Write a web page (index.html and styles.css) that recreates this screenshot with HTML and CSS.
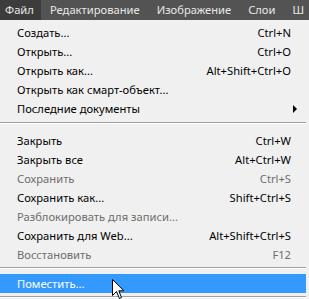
FILE: index.html
```html
<!DOCTYPE html>
<html lang="ru">
  <head>
    <meta charset="utf-8">
    <title>Файл</title>
    <link rel="stylesheet" href="styles.css">
  </head>
  <body>
    <div class="menubar">
      <span class="top active">Файл</span>
      <span class="top">Редактирование</span>
      <span class="top">Изображение</span>
      <span class="top">Слои</span>
      <span class="top">Ш</span>
    </div>
    <ul class="menu">
      <li><span>Создать...</span><span class="key">Ctrl+N</span></li>
      <li><span>Открыть...</span><span class="key">Ctrl+O</span></li>
      <li><span>Открыть как...</span><span class="key">Alt+Shift+Ctrl+O</span></li>
      <li><span>Открыть как смарт-объект...</span></li>
      <li class="sub"><span>Последние документы</span><span class="arrow"></span></li>
      <li class="sep"></li>
      <li><span>Закрыть</span><span class="key">Ctrl+W</span></li>
      <li><span>Закрыть все</span><span class="key">Alt+Ctrl+W</span></li>
      <li class="off"><span>Сохранить</span><span class="key">Ctrl+S</span></li>
      <li><span>Сохранить как...</span><span class="key">Shift+Ctrl+S</span></li>
      <li class="off"><span>Разблокировать для записи...</span></li>
      <li><span>Сохранить для Web...</span><span class="key">Alt+Shift+Ctrl+S</span></li>
      <li class="off"><span>Восстановить</span><span class="key">F12</span></li>
      <li class="sep thin"></li>
      <li class="hot"><span>Поместить...</span></li>
      <li class="sep thin"></li>
    </ul>
    <svg class="cursor" width="13" height="21" viewBox="0 0 13 21">
      <path d="M0.5 0.5 L0.5 16.5 L4.5 12.5 L7.5 19.5 L9.5 18.5 L6.8 11.8 L12 11.8 Z" fill="#fff" stroke="#000" stroke-width="1"/>
    </svg>
  </body>
</html>
```

FILE: styles.css
```css
html, body {
  margin: 0;
  padding: 0;
}
body {
  width: 309px;
  height: 299px;
  overflow: hidden;
  background: #f0f0f0;
  font: 11.2px "Noto Sans", sans-serif;
  position: relative;
}
.menubar {
  display: flex;
  height: 20px;
  background: #535353;
  color: #e8e8e8;
  font-size: 11.2px;
  white-space: nowrap;
  overflow: hidden;
}
.top {
  padding: 0 8px;
  line-height: 20px;
  margin-right: 1px;
}
.top.active {
  background: #3c3c3c;
  padding: 0 7px 0 5px;
}
.menu {
  list-style: none;
  margin: 0;
  padding: 3px 0 0;
}
.menu li {
  display: flex;
  justify-content: space-between;
  align-items: center;
  height: 19px;
  padding: 0 18px 0 17px;
  color: #000;
  white-space: nowrap;
}
.menu li.off {
  color: #6d6d6d;
}
.menu li.sep {
  height: 9px;
  padding: 0;
  display: block;
}
.menu li.sep::before {
  content: "";
  display: block;
  margin: 4px 3px 0 0;
  border-top: 1px solid #a0a0a0;
  border-bottom: 1px solid #fff;
}
.menu li.sep.thin {
  height: 7px;
}
.menu li.sep.thin::before {
  margin-top: 3px;
}
.menu li.hot {
  background: #3399ff;
  color: #fff;
  margin-right: 3px;
}
.arrow {
  width: 0;
  height: 0;
  border-left: 4px solid #000;
  border-top: 4px solid transparent;
  border-bottom: 4px solid transparent;
  margin-right: -6px;
}
.cursor {
  position: absolute;
  left: 112px;
  top: 279px;
}
```
